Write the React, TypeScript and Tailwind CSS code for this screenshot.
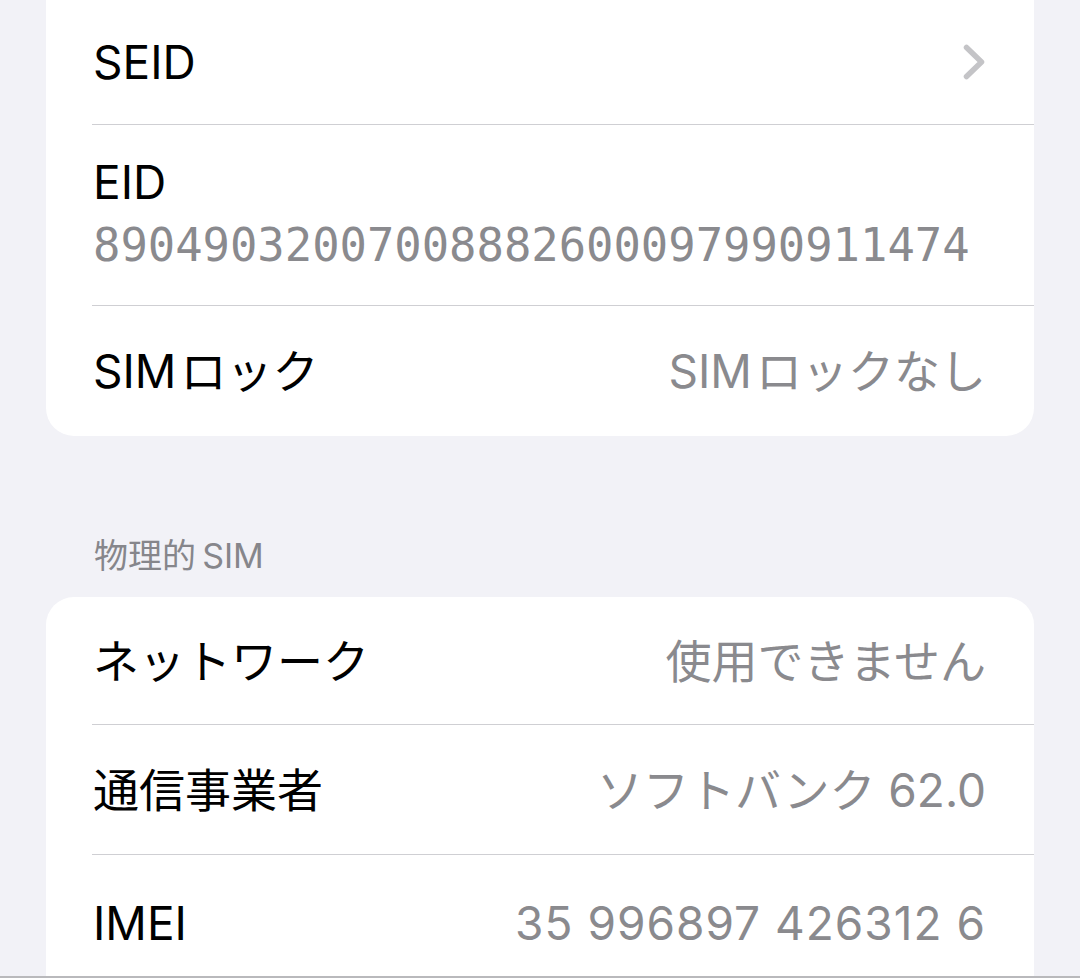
const sans = "font-['Inter','Noto_Sans_CJK_JP',sans-serif]";

function Chevron() {
  return (
    <svg width="22" height="36" viewBox="0 0 22 36" fill="none">
      <path
        d="M3.5 3.5 L18.5 18 L3.5 32.5"
        stroke="#c4c4c7"
        strokeWidth="5.5"
        strokeLinecap="round"
        strokeLinejoin="round"
      />
    </svg>
  );
}

function Row({
  label,
  value,
  height,
  last,
  chevron,
  valueClass = "",
}: {
  label: string;
  value?: string;
  height: string;
  last?: boolean;
  chevron?: boolean;
  valueClass?: string;
}) {
  return (
    <div className="pl-[46px]">
      <div
        className={`flex items-center justify-between pr-[48px] ${height} ${
          last ? "" : "border-b border-[#cfcfd3]"
        }`}
      >
        <span className="pl-[1px] text-[46px] leading-[56px] text-black">
          {label}
        </span>
        {value && (
          <span className={`text-[46px] leading-[56px] text-[#8a8a8e] ${valueClass}`}>
            {value}
          </span>
        )}
        {chevron && (
          <span className="mr-[1px] flex items-center">
            <Chevron />
          </span>
        )}
      </div>
    </div>
  );
}

export default function App() {
  return (
    <div className={`flex h-[978px] flex-col overflow-hidden bg-[#f2f2f7] ${sans}`}>
      <div className="flex flex-1 flex-col overflow-hidden px-[46px]">
        <div className="rounded-b-[28px] bg-white">
          <Row label="SEID" height="h-[125px]" chevron />
          <div className="pl-[46px]">
            <div className="flex h-[181px] flex-col border-b border-[#cfcfd3] pt-[27px]">
              <span className="pl-[1px] text-[46px] leading-[60px] text-black">
                EID
              </span>
              <span className="pl-[1px] font-['DejaVu_Sans_Mono',monospace] text-[45.5px] leading-[68px] text-[#8a8a8e]">
                89049032007008882600097990911474
              </span>
            </div>
          </div>
          <Row label={"SIM\u200aロック"} value={"SIM\u200aロックなし"} height="h-[130px]" last />
        </div>

        <div className="pb-[21px] pl-[48px] pt-[100px]">
          <span className="text-[34px] leading-[40px] text-[#86868b]">
            {"物理的\u2009SIM"}
          </span>
        </div>

        <div className="flex-1 rounded-t-[28px] bg-white">
          <Row label="ネットワーク" value="使用できません" height="h-[128px]" />
          <Row label="通信事業者" value="ソフトバンク 62.0" height="h-[130px]" />
          <Row
            label="IMEI"
            value="35 996897 426312 6"
            height="h-[128px] pt-[8px]"
            valueClass="tracking-[1px]"
            last
          />
        </div>
      </div>
      <div className="h-[2px] bg-[#b9b9bc]" />
    </div>
  );
}
